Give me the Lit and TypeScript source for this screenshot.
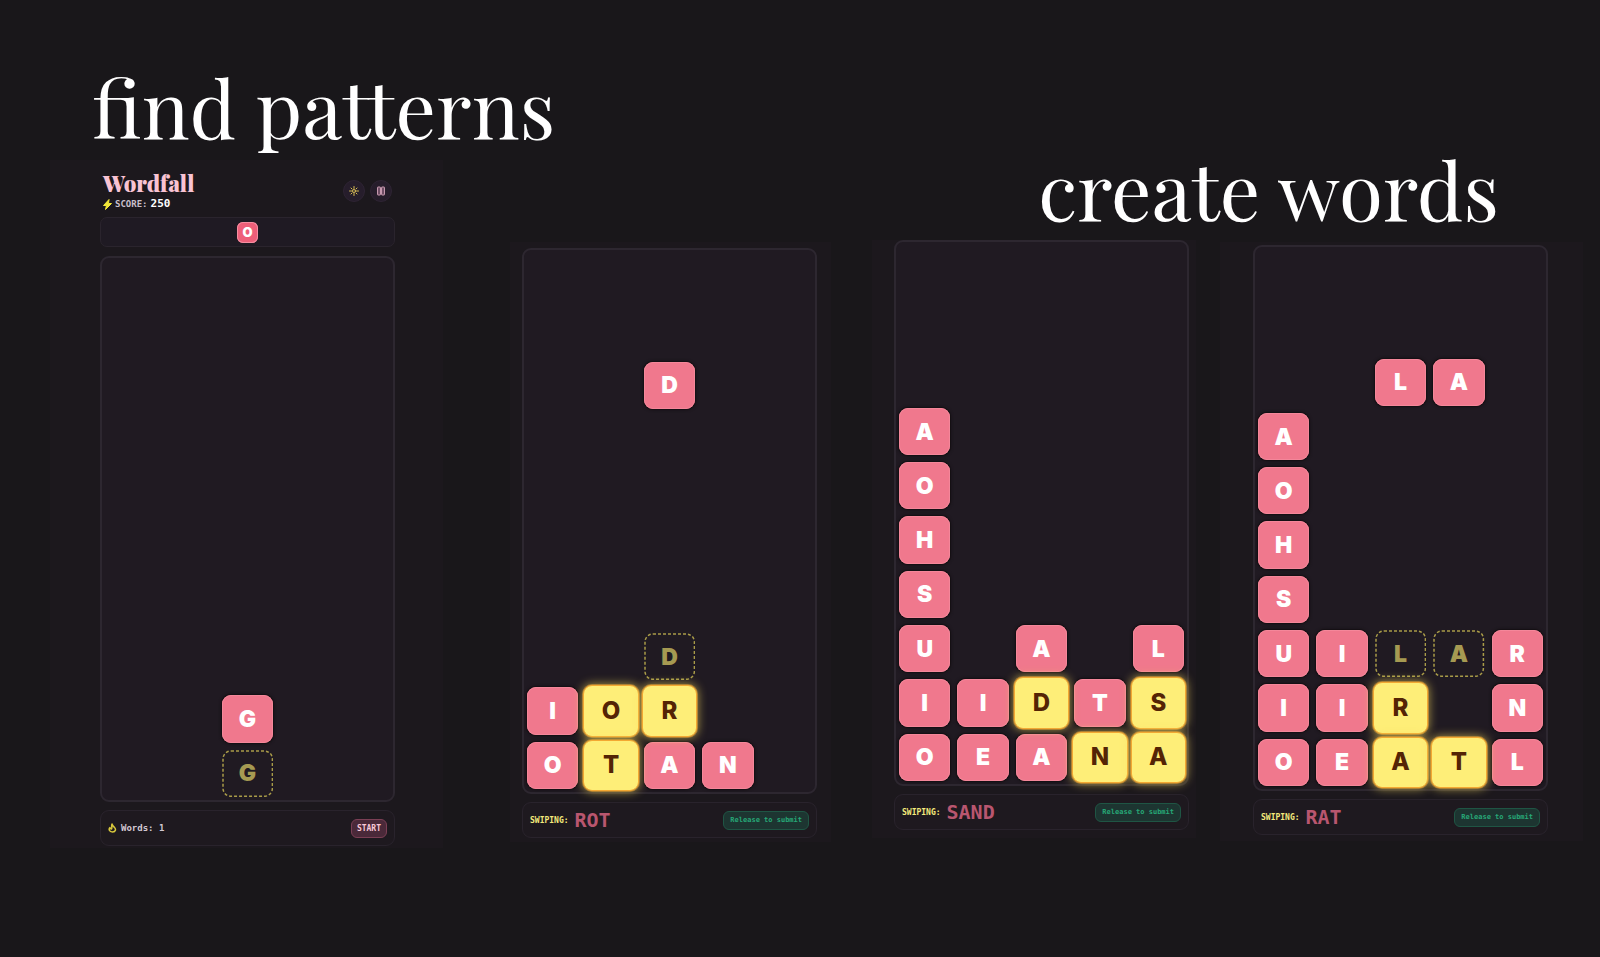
import { LitElement, html, css, nothing } from "lit";
import { customElement, property } from "lit/decorators.js";
import { classMap } from "lit/directives/class-map.js";

type Kind = "tile" | "ghost" | "picked";
interface Cell {
  letter: string;
  kind: Kind;
}

/* Rows use upper case for tiles, "*X" for picked tiles, "?X" for landing spots and "." for gaps. */
const parse = (rows: string[]): (Cell | null)[] => {
  const filled = [...Array(10 - rows.length).fill(". . . . ."), ...rows];
  return filled.flatMap((row: string) =>
    row.split(" ").map((token) => {
      if (token === ".") return null;
      if (token[0] === "*") return { letter: token[1], kind: "picked" as Kind };
      if (token[0] === "?") return { letter: token[1], kind: "ghost" as Kind };
      return { letter: token, kind: "tile" as Kind };
    })
  );
};

@customElement("game-board")
export class GameBoard extends LitElement {
  @property({ attribute: false }) rows: string[] = [];

  static styles = css`
    :host {
      display: block;
    }
    .board {
      box-sizing: border-box;
      display: grid;
      grid-template-columns: repeat(5, minmax(0, 1fr));
      grid-template-rows: repeat(10, minmax(0, 1fr));
      gap: 7px;
      padding: 3px;
      width: 100%;
      aspect-ratio: 295 / 546;
      border: 2px solid #2d2730;
      border-radius: 9px;
      background: #201a22;
    }
    .cell {
      box-sizing: border-box;
      display: grid;
      grid-template: minmax(0, 1fr) / minmax(0, 1fr);
      place-items: center;
      border-radius: 9px;
      font: 900 23px/24px Inter, "Liberation Sans", sans-serif;
    }
    .tile {
      background: #f0788d;
      color: #fff;
      box-shadow: 0 0 0 1px #151014, 0 0 3px 1px #151014, inset 0 0 0 1px #f4879a;
    }
    .ghost {
      color: #a69a52;
    }
    .ghost > * {
      grid-area: 1 / 1;
    }
    .outline {
      width: 100%;
      height: 100%;
      fill: none;
      stroke: #a89b48;
      stroke-width: 1.5;
      stroke-dasharray: 3 2;
    }
    .outline rect {
      width: calc(100% - 2px);
      height: calc(100% - 2px);
    }
    .picked {
      margin: -2px;
      border: 1px solid #f3a832;
      background: #feee78;
      color: #542405;
      font-weight: 800;
      font-size: 24px;
      box-shadow: 0 0 0 1px #f3a83280, 0 0 10px 1px #f5dc5ca0;
      z-index: 1;
    }
  `;

  render() {
    return html`<div class="board">
      ${parse(this.rows).map((cell) =>
        cell
          ? html`<div
              class=${classMap({
                cell: true,
                tile: cell.kind === "tile",
                ghost: cell.kind === "ghost",
                picked: cell.kind === "picked",
              })}
            >
              ${cell.kind === "ghost"
                ? html`<svg class="outline" aria-hidden="true"><rect x="1" y="1" rx="8" /></svg>`
                : nothing}
              <span>${cell.letter}</span>
            </div>`
          : html`<div></div>`
      )}
    </div>`;
  }
}

@customElement("status-bar")
export class StatusBar extends LitElement {
  @property() word = "";
  @property({ type: Number }) count = 0;

  static styles = css`
    :host {
      display: block;
      margin-top: 8px;
    }
    .bar {
      box-sizing: border-box;
      display: flex;
      align-items: center;
      justify-content: space-between;
      height: 36px;
      padding: 0 7px;
      border: 1px solid #29232c;
      border-radius: 9px;
      background: #1e191f;
      font-family: "DejaVu Sans Mono", "Liberation Mono", monospace;
    }
    .info {
      display: flex;
      align-items: center;
      gap: 6px;
    }
    .label {
      color: #f4ea7c;
      font-weight: 700;
      font-size: 8px;
    }
    .word {
      color: #b9566f;
      font-weight: 700;
      font-size: 20px;
      line-height: 24px;
    }
    .hint {
      box-sizing: border-box;
      padding: 0 6px;
      border: 1px solid #1f5544;
      border-radius: 6px;
      background: #1d3531;
      color: #27a877;
      font-weight: 700;
      font-size: 7px;
      line-height: 17px;
      white-space: nowrap;
    }
    .words {
      display: flex;
      align-items: center;
      gap: 4px;
      color: #d3c8d3;
      font-weight: 700;
      font-size: 9px;
    }
    .start {
      height: 19px;
      padding: 0 5px;
      border: 1px solid #7b3f55;
      border-radius: 6px;
      background: #4a2939;
      color: #f8c8d6;
      font: 700 8px/17px "DejaVu Sans Mono", "Liberation Mono", monospace;
    }
  `;

  render() {
    return this.word
      ? html`<footer class="bar">
          <div class="info">
            <span class="label">SWIPING:</span><span class="word">${this.word}</span>
          </div>
          <span class="hint">Release to submit</span>
        </footer>`
      : html`<footer class="bar">
          <div class="words">
            <svg width="9" height="10" viewBox="0 0 18 20" fill="none" stroke="#d8c83c" stroke-width="3" stroke-linejoin="round" stroke-linecap="round" aria-hidden="true">
              <path d="M8 2c1 4 3 5 5 7 3 3 3 9-4 9s-8-6-5-9c0 2 1 3 3 3 2-3-1-5 1-10z" />
            </svg>
            <span>Words: ${this.count}</span>
          </div>
          <button class="start" type="button">START</button>
        </footer>`;
  }
}

@customElement("game-header")
export class GameHeader extends LitElement {
  @property({ type: Number }) score = 0;
  @property() next = "";

  static styles = css`
    :host {
      display: block;
    }
    .top {
      display: flex;
      align-items: center;
      justify-content: space-between;
      height: 46px;
      margin-bottom: 3px;
      padding: 0 3px;
    }
    .title {
      margin: 0 0 4px;
      color: #f9c3d3;
      font: 900 22px/22px "Playfair Display", "Liberation Serif", serif;
    }
    .score {
      display: flex;
      align-items: center;
      gap: 3px;
      height: 12px;
      color: #c9bfca;
      font: 700 9px/12px "DejaVu Sans Mono", "Liberation Mono", monospace;
    }
    .points {
      color: #fff;
      font-size: 11px;
    }
    .actions {
      display: flex;
      gap: 5px;
    }
    .action {
      box-sizing: border-box;
      display: flex;
      align-items: center;
      justify-content: center;
      width: 22px;
      height: 22px;
      padding: 0;
      border: 1px solid #2e2433;
      border-radius: 50%;
      background: #261d2b;
    }
    .next {
      box-sizing: border-box;
      display: flex;
      align-items: center;
      justify-content: center;
      height: 30px;
      margin-bottom: 9px;
      border: 1px solid #2a242d;
      border-radius: 7px;
      background: #1f1a23;
    }
    .piece {
      width: 21px;
      height: 21px;
      border-radius: 6px;
      background: #ee5f79;
      box-shadow: inset 0 0 0 1px #f58ea1;
      color: #fff;
      font: 900 13px/21px Inter, "Liberation Sans", sans-serif;
      text-align: center;
    }
  `;

  render() {
    return html`<header class="top">
        <div>
          <h2 class="title">Wordfall</h2>
          <div class="score">
            <svg width="9" height="11" viewBox="0 0 18 22" fill="#f3e838" aria-hidden="true">
              <path d="M12 1 1 13h6l-2 8L17 9h-6z" stroke="#f3e838" stroke-width="2" stroke-linejoin="round" />
            </svg>
            <span>SCORE:</span><span class="points">${this.score}</span>
          </div>
        </div>
        <div class="actions">
          <button class="action" type="button" aria-label="Toggle theme">
            <svg width="12" height="12" viewBox="0 0 24 24" fill="none" stroke="#d8bd55" stroke-width="2" stroke-linecap="round">
              <circle cx="12" cy="12" r="3" />
              <path d="M12 3v4M12 17v4M3 12h4M17 12h4M6 6l2 2M16 16l2 2M6 18l2-2M16 8l2-2" />
            </svg>
          </button>
          <button class="action" type="button" aria-label="Pause">
            <svg width="12" height="12" viewBox="0 0 24 24" fill="#6f4d65" stroke="#c598ae" stroke-width="2">
              <rect x="5" y="4" width="6" height="16" rx="1" />
              <rect x="13" y="4" width="6" height="16" rx="1" />
            </svg>
          </button>
        </div>
      </header>
      <div class="next">${this.next ? html`<div class="piece">${this.next}</div>` : nothing}</div>`;
  }
}

@customElement("app-root")
export class AppRoot extends LitElement {
  static styles = css`
    :host {
      display: block;
      min-height: 100vh;
      background: #19171a;
    }
    .stage {
      display: grid;
      grid-template-columns: 50fr 393fr 67fr 321fr 41fr 324fr 24fr 363fr 17fr;
      grid-template-rows: 160px auto;
      align-items: start;
    }
    .headline {
      grid-row: 1 / 3;
      margin: 0;
      color: #fff;
      font: 400 80px/80px "Playfair Display", "Liberation Serif", serif;
      white-space: nowrap;
      z-index: 1;
    }
    .find {
      grid-column: 2 / 5;
      padding: 66px 0 0 42px;
    }
    .create {
      grid-column: 6 / 10;
      justify-self: end;
      padding: 148px 101px 0 0;
    }
    .panel {
      grid-row: 2;
      background: #1c181d;
    }
    .first {
      grid-column: 2;
      padding: 8px 48px 2px 50px;
    }
    .second {
      grid-column: 4;
      margin-top: 82px;
      padding: 6px 14px 4px 12px;
    }
    .third {
      grid-column: 6;
      margin-top: 80px;
      padding: 0 7px 8px 22px;
    }
    .fourth {
      grid-column: 8;
      margin-top: 82px;
      padding: 3px 35px 6px 33px;
    }
  `;

  render() {
    return html`<main class="stage">
      <h1 class="headline find">find patterns</h1>
      <h1 class="headline create">create words</h1>
      <section class="panel first">
        <game-header score="250" next="O"></game-header>
        <game-board .rows=${[". . G . .", ". . ?G . ."]}></game-board>
        <status-bar count="1"></status-bar>
      </section>
      <section class="panel second">
        <game-board
          .rows=${[
            ". . D . .",
            ". . . . .",
            ". . . . .",
            ". . . . .",
            ". . . . .",
            ". . ?D . .",
            "I *O *R . .",
            "O *T A N .",
          ]}
        ></game-board>
        <status-bar word="ROT"></status-bar>
      </section>
      <section class="panel third">
        <game-board
          .rows=${[
            "A . . . .",
            "O . . . .",
            "H . . . .",
            "S . . . .",
            "U . A . L",
            "I I *D T *S",
            "O E A *N *A",
          ]}
        ></game-board>
        <status-bar word="SAND"></status-bar>
      </section>
      <section class="panel fourth">
        <game-board
          .rows=${[
            ". . L A .",
            "A . . . .",
            "O . . . .",
            "H . . . .",
            "S . . . .",
            "U I ?L ?A R",
            "I I *R . N",
            "O E *A *T L",
          ]}
        ></game-board>
        <status-bar word="RAT"></status-bar>
      </section>
    </main>`;
  }
}
